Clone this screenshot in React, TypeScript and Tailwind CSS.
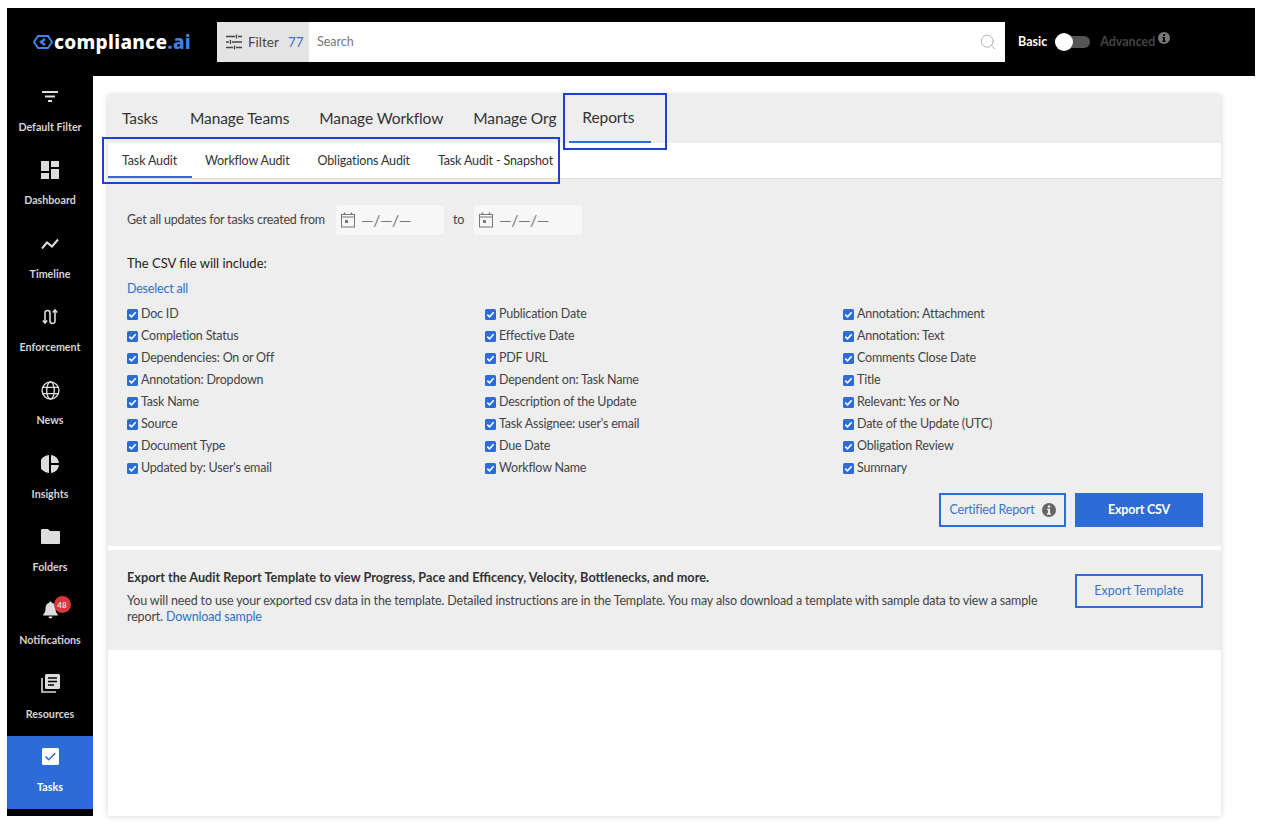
import { Search } from 'lucide-react';
import type { ReactNode } from 'react';

const font = { fontFamily: 'Lato, "Noto Sans", "Liberation Sans", sans-serif' };

function FilterIcon() {
  return (
    <svg width="18" height="16" viewBox="0 0 18 16" fill="none" stroke="#444" strokeWidth="1.3">
      <path d="M1 2.500h9M13 2.500h4M11.500 0.500v4M1 8h3M7 8h10M5.500 6v4M1 13.500h7M11 13.500h6M9.500 11.500v4" />
    </svg>
  );
}

function InfoDot({ size, bg, fg }: { size: number; bg: string; fg: string }) {
  return (
    <svg width={size} height={size} viewBox="0 0 16 16">
      <circle cx="8" cy="8" r="8" fill={bg} />
      <circle cx="8" cy="4" r="1.500" fill={fg} />
      <path d="M5.800 6.600h3.400v5.200h1.200v1.500H5.600v-1.500h1.200V8.100h-1z" fill={fg} />
    </svg>
  );
}

function CalendarIcon() {
  return (
    <svg width="14" height="16" viewBox="0 0 14 16" fill="none" stroke="#777" strokeWidth="1">
      <rect x="0.500" y="2.500" width="13" height="12.500" />
      <path d="M0.500 5h13" />
      <path d="M3.500 0.500v2.500M10.500 0.500v2.500" strokeWidth="1.500" />
      <rect x="4" y="8" width="3" height="3" fill="#777" stroke="none" />
    </svg>
  );
}

function DateInput() {
  return (
    <div className="flex h-[30px] w-[108px] items-center gap-[6px] rounded-[3px] bg-[#f7f7f7] pl-[5px] text-[16px] text-[#777]">
      <CalendarIcon />
      <span className="tracking-[-0.5px]">—/—/—</span>
    </div>
  );
}

function Checkbox() {
  return (
    <svg width="11" height="11" viewBox="0 0 11 11" className="shrink-0">
      <rect width="11" height="11" rx="1.500" fill="#2d6bd6" />
      <path d="M2.300 5.600l2.200 2.200 4.200-4.600" fill="none" stroke="#fff" strokeWidth="1.600" />
    </svg>
  );
}

const sideIcons: Record<string, ReactNode> = {
  'Default Filter': (
    <svg width="16" height="12" viewBox="0 0 16 12" fill="#ddd">
      <rect x="0" y="0" width="16" height="2" />
      <rect x="3" y="4.500" width="10" height="2" />
      <rect x="6" y="9" width="4" height="2" />
    </svg>
  ),
  Dashboard: (
    <svg width="18" height="18" viewBox="0 0 18 18" fill="#ddd">
      <rect x="0" y="0" width="8" height="10" />
      <rect x="10" y="0" width="8" height="6" />
      <rect x="0" y="12" width="8" height="6" />
      <rect x="10" y="8" width="8" height="10" />
    </svg>
  ),
  Timeline: (
    <svg width="18" height="12" viewBox="0 0 18 12" fill="none" stroke="#ddd" strokeWidth="2">
      <path d="M1 10.500l5-6 5 4 6-7" />
    </svg>
  ),
  Enforcement: (
    <svg width="17" height="17" viewBox="0 0 17 17" fill="none" stroke="#ddd" strokeWidth="1.600">
      <path d="M3 15V5a2.500 2.500 0 0 1 5 0v8a2.500 2.500 0 0 0 5 0V2" />
      <path d="M0.800 12.500L3 15l2.200-2.500M10.800 4.500L13 2l2.200 2.500" />
    </svg>
  ),
  News: (
    <svg width="19" height="19" viewBox="0 0 18 18" fill="none" stroke="#ddd" strokeWidth="1.300">
      <circle cx="9" cy="9" r="8" />
      <ellipse cx="9" cy="9" rx="3.600" ry="8" />
      <path d="M1.600 6h14.800M1.600 12h14.800" />
    </svg>
  ),
  Insights: (
    <svg width="18" height="18" viewBox="0 0 18 18" fill="#ddd">
      <path d="M8 0v18A9 9 0 0 1 8 0z" />
      <path d="M10 0a9 9 0 0 1 8 8h-8z" />
      <path d="M10 10h8a9 9 0 0 1-8 8z" />
    </svg>
  ),
  Folders: (
    <svg width="19" height="15" viewBox="0 0 19 15" fill="#ddd">
      <path d="M1 0h6l2 2h9a1 1 0 0 1 1 1v11a1 1 0 0 1-1 1H1a1 1 0 0 1-1-1V1a1 1 0 0 1 1-1z" />
    </svg>
  ),
  Notifications: (
    <svg width="15" height="18" viewBox="0 0 15 18" fill="#ddd">
      <path d="M7.500 0.500a1.200 1.200 0 0 1 1.200 1.300C11.300 2.400 12.500 4.600 12.500 7.500c0 3.500 1 4.500 2.300 6v1H.2v-1c1.300-1.500 2.300-2.500 2.300-6 0-2.900 1.200-5.100 3.800-5.700A1.200 1.200 0 0 1 7.500 0.500z" />
      <path d="M5.500 15.500h4a2 2 0 0 1-4 0z" />
    </svg>
  ),
  Resources: (
    <svg width="19" height="19" viewBox="0 0 19 19" fill="none">
      <path d="M1 4v14h14" stroke="#ddd" strokeWidth="1.600" />
      <rect x="4" y="0" width="15" height="15" rx="1.500" fill="#ddd" />
      <path d="M7 4h9M7 7.500h9M7 11h6" stroke="#000" strokeWidth="1.500" />
    </svg>
  ),
  Tasks: (
    <svg width="17" height="17" viewBox="0 0 17 17">
      <rect width="17" height="17" rx="1.500" fill="#fff" />
      <path d="M3.500 8.500l3.200 3.200 6.500-6.500" fill="none" stroke="#2d6bd6" strokeWidth="1.600" />
    </svg>
  ),
};

function SideItem({ label, active }: { label: string; active?: boolean }) {
  return (
    <div className={`flex h-[73.33px] flex-col items-center text-[10.7px] font-bold ${active ? 'bg-[#2d6bd6] text-white' : 'text-[#d4d4d4]'}`}>
      <div className="flex h-[42px] items-center">
        <div className="relative">
          {sideIcons[label]}
          {label === 'Notifications' && (
            <span className="absolute -right-[13px] -top-[5px] flex h-[17px] w-[17px] items-center justify-center rounded-full bg-[#d9363e] text-[8px] font-bold text-[#f5dcdc]">
              48
            </span>
          )}
        </div>
      </div>
      <span className="mt-[2px] leading-[14px]">{label}</span>
    </div>
  );
}

const columns = [
  ['Doc ID', 'Completion Status', 'Dependencies: On or Off', 'Annotation: Dropdown', 'Task Name', 'Source', 'Document Type', "Updated by: User's email"],
  ['Publication Date', 'Effective Date', 'PDF URL', 'Dependent on: Task Name', 'Description of the Update', "Task Assignee: user's email", 'Due Date', 'Workflow Name'],
  ['Annotation: Attachment', 'Annotation: Text', 'Comments Close Date', 'Title', 'Relevant: Yes or No', 'Date of the Update (UTC)', 'Obligation Review', 'Summary'],
];

const sideLabels = ['Default Filter', 'Dashboard', 'Timeline', 'Enforcement', 'News', 'Insights', 'Folders', 'Notifications', 'Resources'];

export default function App() {
  return (
    <div className="h-[828px] w-[1263px] overflow-hidden bg-white pb-3 pl-[7px] pr-2 pt-2" style={font}>
      <div className="flex h-full flex-col">
        {/* Header */}
        <header className="flex h-[68px] shrink-0 items-center bg-black">
          <div className="flex w-[210px] items-center pl-[26px]">
            <svg width="20" height="14" viewBox="0 0 20 14" className="mr-[1px]">
              <path d="M5 1h10l4 6-4 6H5L1 7z" fill="none" stroke="#3d85e0" strokeWidth="2" />
              <path d="M12 4L8 7l4 3" fill="none" stroke="#3d85e0" strokeWidth="2.500" />
            </svg>
            <span className="text-[19px] font-extrabold leading-none tracking-[0.3px] text-white" style={{ fontFamily: '"Noto Sans", sans-serif' }}>
              compliance<span className="text-[#3d85e0]">.ai</span>
            </span>
          </div>
          <div className="flex h-[40px] w-[92px] items-center bg-[#e4e4e4] pl-[8px] text-[13.5px] text-[#444]">
            <FilterIcon />
            <span className="ml-[5px]">Filter</span>
            <span className="ml-[9px] text-[#3a74c9]">77</span>
          </div>
          <div className="flex h-[40px] w-[696px] items-center justify-between bg-white pl-2 pr-[8px] text-[12.5px] text-[#777]">
            <span>Search</span>
            <Search size={18} strokeWidth={1.2} color="#aaa" />
          </div>
          <div className="ml-[13px] flex items-center text-[12.5px] font-bold">
            <span className="text-white">Basic</span>
            <div className="relative ml-2 h-[12px] w-[35px] rounded-full bg-[#555]">
              <span className="absolute -top-[3px] left-0 h-[18px] w-[18px] rounded-full bg-white" />
            </div>
            <span className="ml-[10px] text-[#444]">Advanced</span>
            <span className="-mt-[8px] ml-[3px]">
              <InfoDot size={12} bg="#777" fg="#000" />
            </span>
          </div>
        </header>

        <div className="flex min-h-0 flex-1">
          {/* Sidebar */}
          <aside className="w-[86px] shrink-0 bg-black">
            {sideLabels.map((label) => (
              <SideItem key={label} label={label} />
            ))}
            <SideItem label="Tasks" active />
          </aside>

          {/* Main */}
          <main className="flex-1 pl-[15px] pr-[34px] pt-[19px]">
            <div className="relative flex h-full flex-col bg-white shadow-[0_0_6px_rgba(0,0,0,0.18)]">
              <div className="flex h-[48px] gap-[30px] bg-[#eeeeee] pl-[14px] pt-[13px] text-[15.5px] leading-[20px] tracking-[-0.1px] text-[#333]">
                <span className="w-[38px]">Tasks</span>
                <span>Manage Teams</span>
                <span>Manage Workflow</span>
                <span>Manage Org</span>
                <span className="relative -top-[1px] -ml-[4px]">
                  Reports
                  <span className="absolute -left-[13px] top-[34px] h-[2px] w-[82px] bg-[#2d6bd6]" />
                </span>
              </div>

              <div className="flex h-[36px] gap-[28px] border-b border-[#ddd] bg-white pl-[14px] pt-[10px] text-[12.5px] leading-[16px] tracking-[-0.15px] text-[#333]">
                <span className="relative">
                  Task Audit
                  <span className="absolute -left-[14px] top-[23px] h-[2px] w-[84px] bg-[#2d6bd6]" />
                </span>
                <span>Workflow Audit</span>
                <span>Obligations Audit</span>
                <span>Task Audit - Snapshot</span>
              </div>

              <section className="h-[367px] bg-[#eeeeee] pl-[19px] pr-[18px] pt-[26px] text-[12.5px] tracking-[-0.2px] text-[#444]">
                <div className="flex items-center">
                  <span className="w-[209px] whitespace-nowrap">Get all updates for tasks created from</span>
                  <DateInput />
                  <span className="ml-[9px] w-[21px]">to</span>
                  <DateInput />
                </div>
                <div className="mt-[19px] text-[13px] leading-[18px] tracking-normal text-[#222]">The CSV file will include:</div>
                <div className="mt-[8px] leading-[18px] text-[#2e6fd0]">Deselect all</div>
                <div className="mt-[5px] grid grid-cols-[358px_358px_1fr]">
                  {columns.map((col, i) => (
                    <div key={i}>
                      {col.map((item) => (
                        <div key={item} className="flex h-[22px] items-center gap-[3px]">
                          <Checkbox />
                          <span>{item}</span>
                        </div>
                      ))}
                    </div>
                  ))}
                </div>
                <div className="mt-[14px] flex justify-end gap-[9px]">
                  <div className="flex h-[34px] w-[127px] items-center justify-center gap-[7px] border-2 border-[#2d6bd6] text-[#3a74c9]">
                    Certified Report
                    <InfoDot size={14} bg="#666" fg="#eee" />
                  </div>
                  <div className="flex h-[34px] w-[128px] items-center justify-center bg-[#2d6bd6] font-bold text-white">
                    Export CSV
                  </div>
                </div>
              </section>

              <div className="h-[4px] bg-white" />

              <section className="flex h-[100px] justify-between bg-[#eeeeee] pl-[19px] pr-[18px] pt-[19px] text-[12.5px] leading-[16px] text-[#444]">
                <div className="w-[925px]">
                  <div className="text-[12.7px] font-bold text-[#333]">
                    Export the Audit Report Template to view Progress, Pace and Efficency, Velocity, Bottlenecks, and more.
                  </div>
                  <div className="mt-[8px] whitespace-nowrap tracking-[-0.15px]">
                    You will need to use your exported csv data in the template. Detailed instructions are in the Template. You may also download a template with sample data to view a sample
                  </div>
                  <div className="flex gap-[3px] tracking-[-0.15px]">
                    <span>report.</span>
                    <span className="text-[#2e6fd0]">Download sample</span>
                  </div>
                </div>
                <div className="mt-[5px] flex h-[34px] w-[128px] items-center justify-center border-2 border-[#2d6bd6] text-[#3a74c9]">
                  Export Template
                </div>
              </section>

              <div className="flex-1 bg-white" />

              {/* Annotation boxes drawn over the tabs */}
              <div className="absolute -top-[2px] left-[455px] h-[57px] w-[104px] border-2 border-[#1f3fd6]" />
              <div className="absolute -left-[6px] top-[42px] h-[47px] w-[458px] border-2 border-[#1f3fd6]" />
            </div>
          </main>
        </div>
      </div>
    </div>
  );
}
